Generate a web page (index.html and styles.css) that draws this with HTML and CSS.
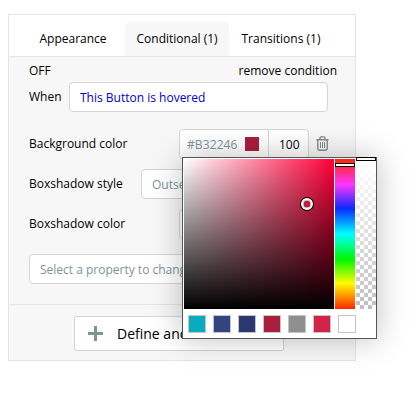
FILE: index.html
```html
<!DOCTYPE html>
<html lang="en">
<head>
<meta charset="utf-8">
<title>Conditional</title>
<link rel="stylesheet" href="styles.css">
</head>
<body>
<div class="panel">
  <nav class="tabs">
    <div class="tab tab-first">Appearance</div>
    <div class="tab tab-active">Conditional (1)</div>
    <div class="tab tab-last">Transitions (1)</div>
  </nav>
  <section class="condition">
    <div class="status"><span>OFF</span><span class="remove">remove condition</span></div>
    <div class="row row-when"><label class="when">When</label><div class="field expression">This Button is hovered</div></div>
    <div class="row row-property">
      <label>Background color</label>
      <div class="field color-field"><span class="hex">#B32246</span><i class="chip"></i><span class="opacity">100</span></div>
      <svg class="trash" width="13" height="15" viewBox="0 0 13 15" fill="none" stroke="#858a8c"><path stroke-width="1.4" d="M.4 3.7h12.2M4 3.4V2Q4 .9 5 .9h3q1 0 1 1.1v1.4M1.8 4v8.6q0 1.6 1.5 1.6h6.4q1.5 0 1.5-1.6V4"/><path d="M4.5 6v6M6.5 6v6M8.5 6v6"/></svg>
    </div>
    <div class="row row-property"><label>Boxshadow style</label><div class="field style-field">Outset</div></div>
    <div class="row row-property"><label>Boxshadow color</label><div class="field color-field"></div></div>
    <div class="field select-property">Select a property to change</div>
  </section>
  <footer class="footer">
    <div class="define"><svg width="15" height="15" viewBox="0 0 15 15"><path d="M6 0h3v6h6v3H9v6H6V9H0V6h6z" fill="#7d9399"/></svg><span>Define another</span></div>
  </footer>
</div>
<div class="picker">
  <div class="channels">
    <div class="saturation"><i class="handle"></i></div>
    <div class="hue"><i class="slider hue-slider"></i></div>
    <div class="alpha"><i class="slider alpha-slider"></i></div>
  </div>
  <div class="swatches">
    <i class="swatch teal"></i><i class="swatch blue"></i><i class="swatch navy"></i><i class="swatch crimson"></i><i class="swatch gray"></i><i class="swatch red"></i><i class="swatch white"></i>
  </div>
</div>
</body>
</html>
```
FILE: styles.css
```css
* { box-sizing: border-box; }
body {
  margin: 0;
  padding: 14px 0 0 8px;
  height: 420px;
  overflow: hidden;
  background: #fff;
  color: #000;
  font: 12px/18px "Open Sans", "Noto Sans", sans-serif;
  white-space: nowrap;
}
.panel {
  width: 348px;
  height: 347px;
  border: 1px solid #e4e4e4;
  background: #f7f7f7;
}
.tabs {
  display: flex;
  align-items: flex-end;
  height: 42px;
  background: #fff;
  border-bottom: 1px solid #e4e4e4;
}
.tab { height: 34px; line-height: 34px; }
.tab-first { width: 116px; padding-left: 30.5px; }
.tab-active {
  width: 104px;
  padding-left: 11.5px;
  background: #f7f7f7;
  border-radius: 5px 5px 0 0;
}
.tab-last { padding-left: 12.5px; }
.condition {
  height: 248px;
  padding: 5px 18px 0 20px;
  border-bottom: 1px solid #e4e4e4;
}
.status { display: flex; justify-content: space-between; height: 20px; }
.row { display: flex; align-items: center; }
.row-when { height: 30px; }
.when { width: 40px; }
.field {
  height: 30px;
  border: 1px solid #d4d4d4;
  border-radius: 4px;
  background: #fff;
  color: #7d9399;
  padding-left: 10px;
  line-height: 29px;
}
.expression { width: 259px; color: #0000d0; line-height: 30px; }
.row-property { height: 30px; margin-bottom: 10px; }
.row-when + .row-property { margin-top: 17px; }
.row-property label { flex: 1; }
.color-field {
  display: flex;
  align-items: center;
  width: 130px;
  margin-right: 28px;
  padding-left: 7px;
}
.color-field:has(+ .trash) { margin-right: 7px; }
.hex { width: 58px; letter-spacing: .1px; }
.chip { width: 14px; height: 14px; background: #a91f3e; }
.opacity {
  height: 28px;
  margin-left: 9px;
  padding-left: 10px;
  border-left: 1px solid #d4d4d4;
  color: #000;
}
.trash { margin: 0 8px 2px 0; }
.style-field { width: 168px; margin-right: 28px; }
.select-property { width: 298px; }
.footer { padding: 11px 0 0 65px; }
.define {
  display: flex;
  align-items: center;
  width: 210px;
  height: 35px;
  padding-left: 13px;
  gap: 14px;
  border: 1px solid #d4d4d4;
  border-radius: 2px;
  background: #fff;
  font-size: 14px;
}
.row-property:has(.style-field) + .row-property { margin-bottom: 15px; }
.picker {
  position: absolute;
  left: 182px;
  top: 157px;
  width: 195px;
  height: 182px;
  padding: 1px 0 0 1px;
  border: 1px solid #555;
  background: #fff;
  box-shadow: 0 0 30px rgba(0,0,0,.25);
}
.channels { display: flex; gap: 1px; height: 150px; }
.saturation {
  position: relative;
  width: 150px;
  background: linear-gradient(transparent, #000), linear-gradient(90deg, #fff, #ff0039);
}
.handle {
  position: absolute;
  left: 117px;
  top: 39px;
  width: 12px;
  height: 12px;
  border: 2px solid #fff;
  border-radius: 50%;
  background: #b32246;
  box-shadow: 0 0 0 1px #000, inset 0 0 0 .5px #fff;
}
.hue {
  position: relative;
  width: 20px;
  background: linear-gradient(#ff2600, #ff35ff 17%, #0a2bff 33%, #0ff 50%, #00f900 67%, #fffb00 83%, #ff2600);
}
.alpha {
  position: relative;
  width: 20px;
  background: linear-gradient(#fff, transparent), repeating-conic-gradient(#bfbfbf 0 25%, #fff 0 50%) 0 2px / 8px 8px;
}
.slider {
  position: absolute;
  left: 0;
  width: 20px;
  height: 4px;
  border: 1px solid #000;
  background: #fff;
}
.hue-slider { top: 4px; }
.alpha-slider { top: -2px; }
.swatches { display: flex; gap: 7px; padding: 6px 0 0 4px; }
.swatch { width: 18px; height: 18px; border: 1px solid #c4c4c4; }
.teal { background: #07acc1; }
.blue { background: #344483; }
.navy { background: #2d3873; }
.crimson { background: #a91f3e; }
.gray { background: #8f8f8f; }
.red { background: #d0244b; }
.white { background: #fff; }
```
